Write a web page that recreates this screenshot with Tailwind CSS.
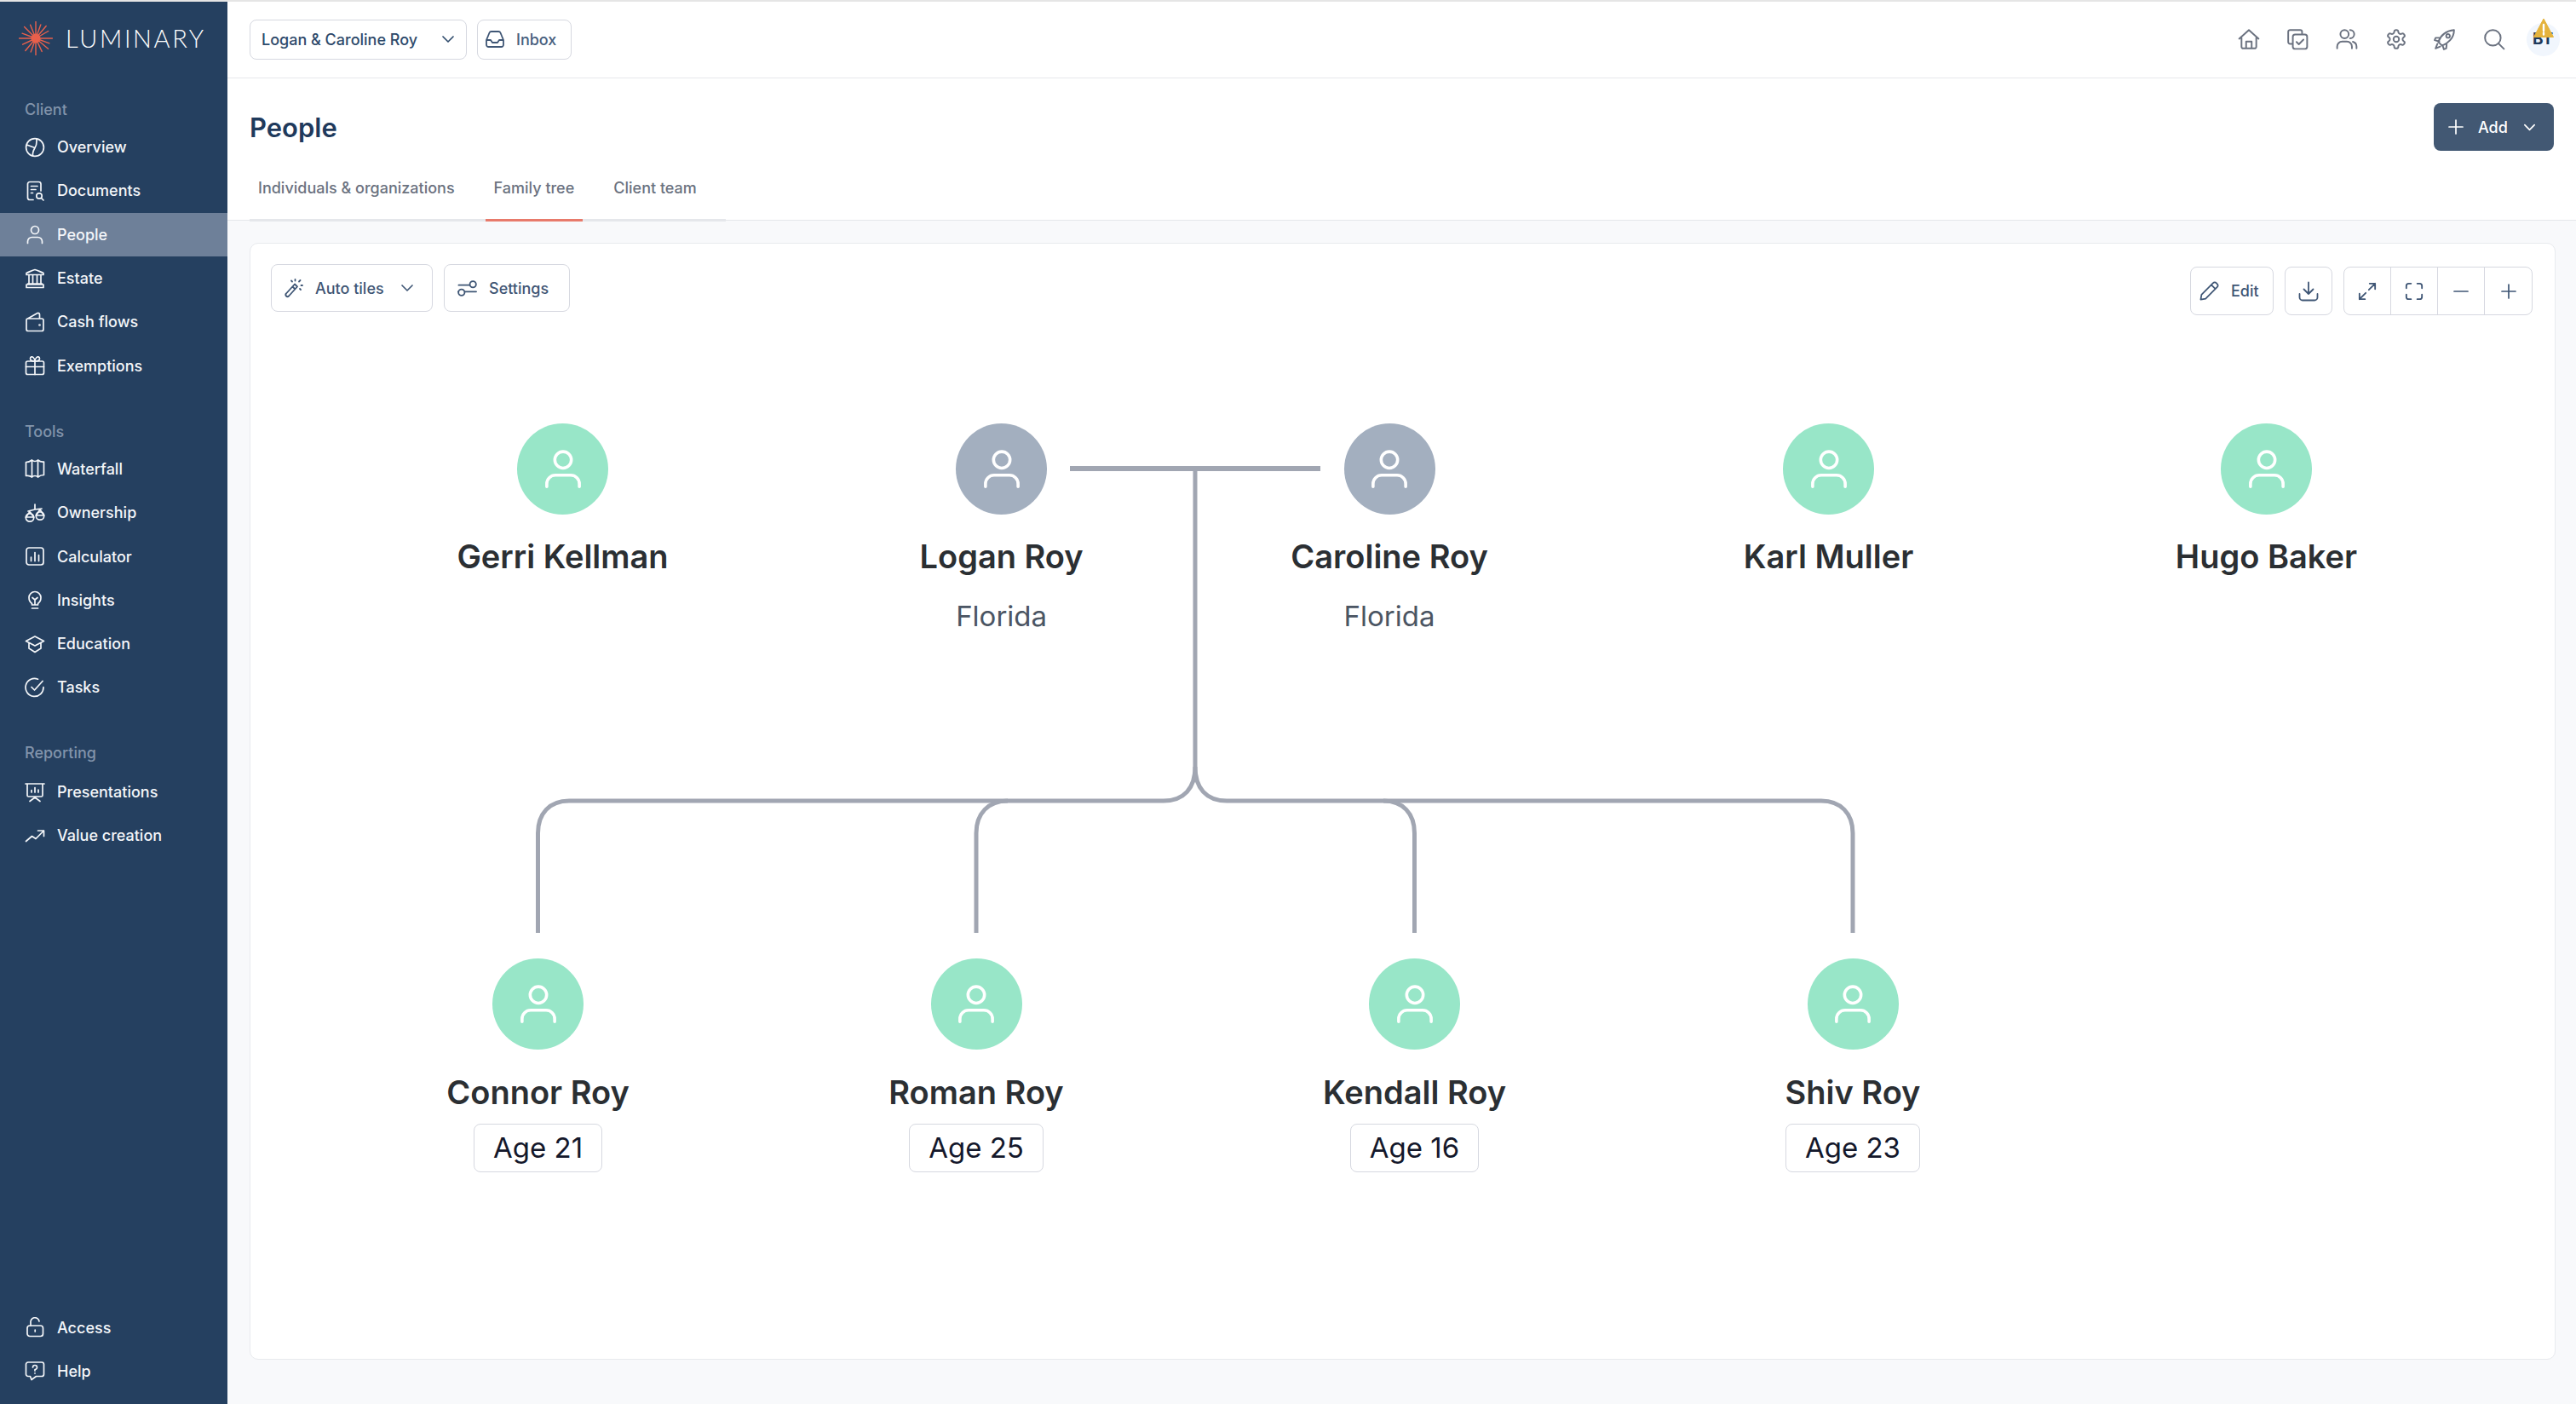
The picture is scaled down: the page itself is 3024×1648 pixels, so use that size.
<!DOCTYPE html>
<html lang="en">
<head>
<meta charset="utf-8">
<title>Luminary - People</title>
<script src="https://cdn.jsdelivr.net/npm/@tailwindcss/browser@4"></script>
</head>
<body class="m-0">
<div class="w-[3024px] h-[1648px] overflow-hidden flex flex-col bg-white font-['Inter',sans-serif]">
  <div class="h-[2px] bg-[#e5e5e5] shrink-0"></div>
  <div class="flex flex-1 min-h-0">
    <!-- Sidebar -->
    <aside class="w-[267px] shrink-0 bg-[#254060] flex flex-col text-[18px] font-medium text-[#f4f6f9] pb-[13px]">
      <div class="h-[87px] shrink-0 flex items-center pl-[22px] gap-[15px] -mt-[1px]">
        <svg width="40" height="40" viewBox="-20 -20 40 40" stroke="#e8604c" stroke-width="1.4" stroke-linecap="round">
          <circle r="5.5" fill="#e8604c" stroke="none"/>
          <g>
            <line y2="-19.5"/><line y2="-17" transform="rotate(20)"/><line y2="-19" transform="rotate(40)"/><line y2="-17" transform="rotate(60)"/><line y2="-19.5" transform="rotate(90)"/><line y2="-17" transform="rotate(110)"/><line y2="-19" transform="rotate(130)"/><line y2="-17" transform="rotate(155)"/><line y2="-19.5" transform="rotate(180)"/><line y2="-17" transform="rotate(200)"/><line y2="-19" transform="rotate(220)"/><line y2="-17" transform="rotate(245)"/><line y2="-19.5" transform="rotate(270)"/><line y2="-17" transform="rotate(290)"/><line y2="-19" transform="rotate(315)"/><line y2="-17" transform="rotate(338)"/>
          </g>
        </svg>
        <span class="font-['Lato',sans-serif] font-light text-[29px] tracking-[2.6px] text-white leading-none">LUMINARY</span>
      </div>
      <div class="h-[37px] mt-[22px] flex items-center pl-[29px] text-[#8294ab]">Client</div>
      <a class="h-[51.3px] flex items-center pl-[29px] gap-[14px]">
        <svg class="size-[24px] shrink-0" viewBox="0 0 24 24" fill="none" stroke="currentColor" stroke-width="1.7" stroke-linecap="round" stroke-linejoin="round"><circle cx="12" cy="12" r="10.4"/><path d="M14 2C14 7 14.500 9 12 12.500C10.500 15 9 18 9.500 22M12 12.500L2.500 9"/></svg>
        Overview</a>
      <a class="h-[51.3px] flex items-center pl-[29px] gap-[14px]">
        <svg class="size-[24px] shrink-0" viewBox="0 0 24 24" fill="none" stroke="currentColor" stroke-width="1.7" stroke-linecap="round" stroke-linejoin="round"><path d="M10 22.500H6A2.500 2.500 0 0 1 3.500 20V4A2.500 2.500 0 0 1 6 1.500H16.500A2.500 2.500 0 0 1 19 4V12M7.500 6.500H15M7.500 10.500H13M7.500 14.500H9.500"/><circle cx="17" cy="18" r="3.200"/><path d="M19.500 20.500L22 23"/></svg>
        Documents</a>
      <a class="h-[51.3px] flex items-center pl-[29px] gap-[14px] bg-[#6e8099]">
        <svg class="size-[24px] shrink-0" viewBox="0 0 24 24" fill="none" stroke="currentColor" stroke-width="1.7" stroke-linecap="round" stroke-linejoin="round"><circle cx="12" cy="7" r="4.500"/><path d="M3.500 22.500V20.500A5 5 0 0 1 8.500 15.500H15.500A5 5 0 0 1 20.500 20.500V22.500"/></svg>
        People</a>
      <a class="h-[51.3px] flex items-center pl-[29px] gap-[14px]">
        <svg class="size-[24px] shrink-0" viewBox="0 0 24 24" fill="none" stroke="currentColor" stroke-width="1.7" stroke-linecap="round" stroke-linejoin="round"><path d="M2 7.500V5.500C6 4 9 2 12 1.500C15 2 18 4 22 5.500V7.500H2ZM5 7.500V18M9.500 7.500V18M14.500 7.500V18M19 7.500V18M3.500 18H20.500V19M2 19H22V22.500H2Z"/></svg>
        Estate</a>
      <a class="h-[51.3px] flex items-center pl-[29px] gap-[14px]">
        <svg class="size-[24px] shrink-0" viewBox="0 0 24 24" fill="none" stroke="currentColor" stroke-width="1.7" stroke-linecap="round" stroke-linejoin="round"><path d="M3.500 8H20A2 2 0 0 1 22 10V20.500A2 2 0 0 1 20 22.500H4A2 2 0 0 1 2 20.500V9.500A1.500 1.500 0 0 1 3.500 8ZM3.500 8L15 1.500C16.500 1 17.500 2 17.500 3.500V8"/><circle cx="17.500" cy="15.500" r="0.500"/></svg>
        Cash flows</a>
      <a class="h-[51.3px] flex items-center pl-[29px] gap-[14px]">
        <svg class="size-[24px] shrink-0" viewBox="0 0 24 24" fill="none" stroke="currentColor" stroke-width="1.7" stroke-linecap="round" stroke-linejoin="round"><rect x="1.500" y="7" width="21" height="15.500" rx="2"/><path d="M1.500 13.500H22.500M12 7V22.500M12 7C9 7 6.500 6.500 6.500 4S9 1.500 10 2.500C11 3.500 12 5 12 7ZM12 7C15 7 17.500 6.500 17.500 4S15 1.500 14 2.500C13 3.500 12 5 12 7Z"/></svg>
        Exemptions</a>

      <div class="h-[37px] mt-[33px] flex items-center pl-[29px] text-[#8294ab]">Tools</div>
      <a class="h-[51.3px] flex items-center pl-[29px] gap-[14px]">
        <svg class="size-[24px] shrink-0" viewBox="0 0 24 24" fill="none" stroke="currentColor" stroke-width="1.7" stroke-linecap="round" stroke-linejoin="round"><path d="M1.500 4.500C4 4.500 6 4 8.500 2C10.500 4 13.500 4 15.500 2C18 4 20 4.500 22.500 4C22.500 10 22.500 15 22.500 19.500C20 19.500 18 20 15.500 22C13.500 20 10.500 20 8.500 22C6 20 4 20 1.500 20.500ZM8.500 2V22M15.500 2V22"/></svg>
        Waterfall</a>
      <a class="h-[51.3px] flex items-center pl-[29px] gap-[14px]">
        <svg class="size-[24px] shrink-0" viewBox="0 0 24 24" fill="none" stroke="currentColor" stroke-width="1.7" stroke-linecap="round" stroke-linejoin="round"><path d="M12 2V8M4 10L12 8L20 7M6 10.500L1.500 17M6 10.500L10.500 17M18 8L13.500 15M18 8L22.500 15"/><circle cx="6" cy="17.500" r="4.700"/><circle cx="18" cy="15.500" r="4.700"/><path d="M1.500 17H10.500M13.500 15H22.500"/></svg>
        Ownership</a>
      <a class="h-[51.3px] flex items-center pl-[29px] gap-[14px]">
        <svg class="size-[24px] shrink-0" viewBox="0 0 24 24" fill="none" stroke="currentColor" stroke-width="1.7" stroke-linecap="round" stroke-linejoin="round"><rect x="2" y="2" width="20" height="20" rx="3"/><path d="M7.500 13V17.500M12 7.500V17.500M16.500 10.500V17.500"/></svg>
        Calculator</a>
      <a class="h-[51.3px] flex items-center pl-[29px] gap-[14px]">
        <svg class="size-[24px] shrink-0" viewBox="0 0 24 24" fill="none" stroke="currentColor" stroke-width="1.7" stroke-linecap="round" stroke-linejoin="round"><path d="M8.500 16.500C6.500 15 5 13 5 9.500A7 7 0 0 1 19 9.500C19 13 17.500 15 15.500 16.500V18H8.500ZM8.500 22H15.500M9 9.500L12 12L15 9.500M12 12V17.500"/></svg>
        Insights</a>
      <a class="h-[51.3px] flex items-center pl-[29px] gap-[14px]">
        <svg class="size-[24px] shrink-0" viewBox="0 0 24 24" fill="none" stroke="currentColor" stroke-width="1.7" stroke-linecap="round" stroke-linejoin="round"><path d="M12 3L1.500 8.500L12 14L22.500 8.500ZM5 10.500V17L12 21.500L19 17V10.500"/></svg>
        Education</a>
      <a class="h-[51.3px] flex items-center pl-[29px] gap-[14px]">
        <svg class="size-[24px] shrink-0" viewBox="0 0 24 24" fill="none" stroke="currentColor" stroke-width="1.7" stroke-linecap="round" stroke-linejoin="round"><path d="M22 11.500A10.500 10.500 0 1 1 15.500 2.200M8 11.500L11.500 15L21 4.500"/></svg>
        Tasks</a>

      <div class="h-[37px] mt-[32px] mb-[2.4px] flex items-center pl-[29px] text-[#8294ab]">Reporting</div>
      <a class="h-[51.3px] flex items-center pl-[29px] gap-[14px]">
        <svg class="size-[24px] shrink-0" viewBox="0 0 24 24" fill="none" stroke="currentColor" stroke-width="1.7" stroke-linecap="round" stroke-linejoin="round"><path d="M1 2H23M3 2V15.500A1.500 1.500 0 0 0 4.500 17H19.500A1.500 1.500 0 0 0 21 15.500V2M12 17V19M12 18L6 22.500M12 18L18 22.500M8 12V9.500M12 12V6.500M16 12V9"/></svg>
        Presentations</a>
      <a class="h-[51.3px] flex items-center pl-[29px] gap-[14px]">
        <svg class="size-[24px] shrink-0" viewBox="0 0 24 24" fill="none" stroke="currentColor" stroke-width="1.7" stroke-linecap="round" stroke-linejoin="round"><path d="M1.500 18.500L8.500 12.500L13 15.500L22.500 6M15.500 6H22.500V12.500"/></svg>
        Value creation</a>

      <a class="h-[51.3px] mt-auto flex items-center pl-[29px] gap-[14px]">
        <svg class="size-[24px] shrink-0" viewBox="0 0 24 24" fill="none" stroke="currentColor" stroke-width="1.7" stroke-linecap="round" stroke-linejoin="round"><rect x="3" y="10" width="18.500" height="12.500" rx="3"/><path d="M7 10V6.500A5 5 0 0 1 17 5M12.200 15V17"/></svg>
        Access</a>
      <a class="h-[51.3px] flex items-center pl-[29px] gap-[14px]">
        <svg class="size-[24px] shrink-0" viewBox="0 0 24 24" fill="none" stroke="currentColor" stroke-width="1.7" stroke-linecap="round" stroke-linejoin="round"><path d="M4 2H20A2.500 2.500 0 0 1 22.500 4.500V16A2.500 2.500 0 0 1 20 18.500H13.500L8 22.500L6.500 18.500H4A2.500 2.500 0 0 1 1.500 16V4.500A2.500 2.500 0 0 1 4 2ZM9.500 8A2.500 2.500 0 1 1 12 10.500V12M12 14.800V15"/></svg>
        Help</a>
    </aside>

    <!-- Main -->
    <div class="flex-1 min-w-0 flex flex-col bg-[#f8f9fb]">
      <header class="h-[90px] shrink-0 bg-white border-b border-[#e7e8eb] flex items-center justify-between pl-[26px] pr-[19.500px] text-[18px] text-[#2e4a6b] font-medium">
        <div class="flex items-center gap-[12px] -mt-[1px]">
          <button class="w-[255px] h-[47px] flex items-center justify-between pl-[13px] pr-[12px] bg-white border border-[#d6d8e0] rounded-[8px]">
            Logan &amp; Caroline Roy
            <svg class="size-[18px]" viewBox="0 0 24 24" fill="none" stroke="currentColor" stroke-width="2.200" stroke-linecap="round" stroke-linejoin="round"><path d="M4 8L12 16L20 8"/></svg>
          </button>
          <button class="w-[111px] h-[47px] flex items-center gap-[13px] pl-[8px] bg-white border border-[#d6d8e0] rounded-[8px] text-[#48607e]">
            <svg class="size-[24px]" viewBox="0 0 24 24" fill="none" stroke="#3f5675" stroke-width="1.800" stroke-linecap="round" stroke-linejoin="round"><path d="M2 13L5.500 4.500A2.500 2.500 0 0 1 7.800 3H16.200A2.500 2.500 0 0 1 18.500 4.500L22 13V18.500A2.500 2.500 0 0 1 19.500 21H4.500A2.500 2.500 0 0 1 2 18.500ZM2 13H7L9 16H15L17 13H22"/></svg>
            Inbox
          </button>
        </div>
        <div class="flex items-center -mt-[1px]">
          <div class="flex items-center gap-[31.700px] text-[#6b7280]">
            <svg class="size-[26px]" viewBox="0 0 24 24" fill="none" stroke="currentColor" stroke-width="1.800" stroke-linecap="round" stroke-linejoin="round"><path d="M1.500 11.500L12 2L22.500 11.500M4 9.500V20A2 2 0 0 0 6 22H18A2 2 0 0 0 20 20V9.500M9 22V14.500H15V22"/></svg>
            <svg class="size-[26px]" viewBox="0 0 24 24" fill="none" stroke="currentColor" stroke-width="1.800" stroke-linecap="round" stroke-linejoin="round"><path d="M6.500 17H4A2 2 0 0 1 2 15V4A2 2 0 0 1 4 2H15A2 2 0 0 1 17 4V6.500"/><rect x="7" y="7" width="15.500" height="15.500" rx="2.500"/><path d="M11 15L13.500 17.500L18.500 12.500"/></svg>
            <svg class="size-[26px]" viewBox="0 0 24 24" fill="none" stroke="currentColor" stroke-width="1.800" stroke-linecap="round" stroke-linejoin="round"><circle cx="9.500" cy="6.500" r="4.500"/><path d="M1.500 22V20A5.500 5.500 0 0 1 7 14.500H12A5.500 5.500 0 0 1 17.500 20V22M15.500 2A4.500 4.500 0 0 1 15.500 11M18.500 14.800A5.500 5.500 0 0 1 22.500 20V22"/></svg>
            <svg class="size-[26px]" viewBox="0 0 24 24" fill="none" stroke="currentColor" stroke-width="1.800" stroke-linecap="round" stroke-linejoin="round"><path d="M12.220 2h-.44a2 2 0 0 0-2 2v.18a2 2 0 0 1-1 1.730l-.43.250a2 2 0 0 1-2 0l-.150-.080a2 2 0 0 0-2.730.730l-.220.380a2 2 0 0 0 .730 2.730l.150.100a2 2 0 0 1 1 1.720v.510a2 2 0 0 1-1 1.740l-.150.090a2 2 0 0 0-.730 2.730l.220.380a2 2 0 0 0 2.730.730l.150-.080a2 2 0 0 1 2 0l.430.250a2 2 0 0 1 1 1.730V20a2 2 0 0 0 2 2h.44a2 2 0 0 0 2-2v-.18a2 2 0 0 1 1-1.730l.430-.250a2 2 0 0 1 2 0l.150.080a2 2 0 0 0 2.730-.730l.220-.390a2 2 0 0 0-.730-2.730l-.150-.080a2 2 0 0 1-1-1.740v-.500a2 2 0 0 1 1-1.740l.150-.090a2 2 0 0 0 .730-2.730l-.220-.380a2 2 0 0 0-2.730-.730l-.150.080a2 2 0 0 1-2 0l-.430-.250a2 2 0 0 1-1-1.730V4a2 2 0 0 0-2-2z"/><circle cx="12" cy="12" r="3"/></svg>
            <svg class="size-[26px]" viewBox="0 0 24 24" fill="none" stroke="currentColor" stroke-width="1.800" stroke-linecap="round" stroke-linejoin="round"><path d="M7 17L5 15C7 9 12 3 22 2C22 11 15 17 9 19ZM6 10.500L2 10.500L1 13L6 14.500M14 18L13.500 22L11 23L9.500 18.500M15.500 6.500A2 2 0 1 0 15.500 10.500A2 2 0 1 0 15.500 6.500M4 17L2 22L7 20"/></svg>
            <svg class="size-[26px]" viewBox="0 0 24 24" fill="none" stroke="currentColor" stroke-width="1.800" stroke-linecap="round" stroke-linejoin="round"><circle cx="10.500" cy="10.500" r="8.500"/><path d="M16.500 16.500L22.500 22.500"/></svg>
          </div>
          <div class="relative ml-[24.500px] size-[39px] rounded-full bg-[#f1f6fd] flex items-center justify-center text-[19px] font-bold text-[#1f3a5c]">
            BT
            <svg class="absolute -top-[6px] left-[8px]" width="24" height="23" viewBox="0 0 24 23"><path d="M12 1L23.500 22.500H0.500Z" fill="#e5b33c" stroke="#e5b33c" stroke-linejoin="round"/><path d="M12 8V15M12 17.500V19.500" stroke="#ffffff" stroke-width="2.400" stroke-linecap="round"/></svg>
          </div>
        </div>
      </header>

      <div class="h-[167px] shrink-0 bg-white border-b border-[#e5e7eb] pl-[26px] pr-[26px]">
        <div class="h-[114px] flex items-center justify-between">
          <h1 class="text-[31px] font-semibold text-[#1f3a5c] leading-none">People</h1>
          <button class="w-[141px] h-[56px] flex items-center bg-[#425873] rounded-[8px] text-white text-[18px] font-medium pl-[17px]">
            <svg class="size-[18px] mr-[17px]" viewBox="0 0 18 18" fill="none" stroke="currentColor" stroke-width="1.700" stroke-linecap="round"><path d="M9 1V17M1 9H17"/></svg>
            Add
            <svg class="size-[17px] ml-[17px]" viewBox="0 0 24 24" fill="none" stroke="currentColor" stroke-width="2.400" stroke-linecap="round" stroke-linejoin="round"><path d="M4 8L12 16L20 8"/></svg>
          </button>
        </div>
        <div class="w-[559px] h-[54px] border-b-[3px] border-[#e5e7eb] flex gap-[26px] text-[18px] font-medium text-[#6b7280]">
          <a class="h-[54px] pt-[3px] px-[10px] leading-[24px]">Individuals &amp; organizations</a>
          <a class="h-[54px] pt-[3px] px-[10px] leading-[24px] border-b-[3px] border-[#e87a6b]">Family tree</a>
          <a class="h-[54px] pt-[3px] px-[10px] leading-[24px]">Client team</a>
        </div>
      </div>

      <!-- Card -->
      <main class="relative flex-1 ml-[26px] mr-[24px] mt-[26px] mb-[52px] bg-white border border-[#e8eaee] rounded-[10px] text-[18px] font-medium text-[#3f5675]">
        <!-- Family tree canvas -->
        <svg class="absolute left-0 top-0" width="2705" height="1309" viewBox="294 286 2705 1309" fill="none" stroke="#a1a6b2" stroke-linecap="butt">
          <path d="M1256 550H1550" stroke-width="6"/>
          <path stroke-width="5" d="M1403 550V900C1403 925 1390 940 1366 940H668C645 940 631.500 955 631.500 978V1095"/>
          <path stroke-width="5" d="M1403 900C1403 925 1416 940 1440 940H2138C2161 940 2175 955 2175 978V1095"/>
          <path stroke-width="5" d="M1183 940C1160 940 1146 955 1146 978V1095"/>
          <path stroke-width="5" d="M1624 940C1647 940 1660.500 955 1660.500 978V1095"/>
        </svg>

        <div class="absolute left-[216.500px] top-[211px] w-[300px] flex flex-col items-center">
          <div class="size-[107px] rounded-full bg-[#98e6c8] flex items-center justify-center"><svg class="size-[54px]" viewBox="0 0 24 24" fill="none" stroke="#ffffff" stroke-width="1.600" stroke-linecap="round"><circle cx="12" cy="7" r="4.300"/><path d="M3.500 21V19.500A4.500 4.500 0 0 1 8 15H16A4.500 4.500 0 0 1 20.500 19.500V21"/></svg></div>
          <div class="mt-[26px] text-[38px] leading-[46px] font-semibold text-[#2b2f33]">Gerri Kellman</div>
        </div>
        <div class="absolute left-[731.600px] top-[211px] w-[300px] flex flex-col items-center">
          <div class="size-[107px] rounded-full bg-[#a3afbf] flex items-center justify-center"><svg class="size-[54px]" viewBox="0 0 24 24" fill="none" stroke="#ffffff" stroke-width="1.600" stroke-linecap="round"><circle cx="12" cy="7" r="4.300"/><path d="M3.500 21V19.500A4.500 4.500 0 0 1 8 15H16A4.500 4.500 0 0 1 20.500 19.500V21"/></svg></div>
          <div class="mt-[26px] text-[38px] leading-[46px] font-semibold text-[#2b2f33]">Logan Roy</div>
          <div class="mt-[27px] text-[33px] leading-[40px] font-normal text-[#4b5563]">Florida</div>
        </div>
        <div class="absolute left-[1187px] top-[211px] w-[300px] flex flex-col items-center">
          <div class="size-[107px] rounded-full bg-[#a3afbf] flex items-center justify-center"><svg class="size-[54px]" viewBox="0 0 24 24" fill="none" stroke="#ffffff" stroke-width="1.600" stroke-linecap="round"><circle cx="12" cy="7" r="4.300"/><path d="M3.500 21V19.500A4.500 4.500 0 0 1 8 15H16A4.500 4.500 0 0 1 20.500 19.500V21"/></svg></div>
          <div class="mt-[26px] text-[38px] leading-[46px] font-semibold text-[#2b2f33]">Caroline Roy</div>
          <div class="mt-[27px] text-[33px] leading-[40px] font-normal text-[#4b5563]">Florida</div>
        </div>
        <div class="absolute left-[1702.500px] top-[211px] w-[300px] flex flex-col items-center">
          <div class="size-[107px] rounded-full bg-[#98e6c8] flex items-center justify-center"><svg class="size-[54px]" viewBox="0 0 24 24" fill="none" stroke="#ffffff" stroke-width="1.600" stroke-linecap="round"><circle cx="12" cy="7" r="4.300"/><path d="M3.500 21V19.500A4.500 4.500 0 0 1 8 15H16A4.500 4.500 0 0 1 20.500 19.500V21"/></svg></div>
          <div class="mt-[26px] text-[38px] leading-[46px] font-semibold text-[#2b2f33]">Karl Muller</div>
        </div>
        <div class="absolute left-[2216.500px] top-[211px] w-[300px] flex flex-col items-center">
          <div class="size-[107px] rounded-full bg-[#98e6c8] flex items-center justify-center"><svg class="size-[54px]" viewBox="0 0 24 24" fill="none" stroke="#ffffff" stroke-width="1.600" stroke-linecap="round"><circle cx="12" cy="7" r="4.300"/><path d="M3.500 21V19.500A4.500 4.500 0 0 1 8 15H16A4.500 4.500 0 0 1 20.500 19.500V21"/></svg></div>
          <div class="mt-[26px] text-[38px] leading-[46px] font-semibold text-[#2b2f33]">Hugo Baker</div>
        </div>

        <div class="absolute left-[187.600px] top-[839px] w-[300px] flex flex-col items-center">
          <div class="size-[107px] rounded-full bg-[#98e6c8] flex items-center justify-center"><svg class="size-[54px]" viewBox="0 0 24 24" fill="none" stroke="#ffffff" stroke-width="1.600" stroke-linecap="round"><circle cx="12" cy="7" r="4.300"/><path d="M3.500 21V19.500A4.500 4.500 0 0 1 8 15H16A4.500 4.500 0 0 1 20.500 19.500V21"/></svg></div>
          <div class="mt-[27px] text-[38px] leading-[46px] font-semibold text-[#2b2f33]">Connor Roy</div>
          <div class="mt-[14px] h-[57px] px-[22px] flex items-center border-[1.500px] border-[#d6d8e0] rounded-[8px] bg-white text-[33px] font-normal text-[#14182b]">Age 21</div>
        </div>
        <div class="absolute left-[702px] top-[839px] w-[300px] flex flex-col items-center">
          <div class="size-[107px] rounded-full bg-[#98e6c8] flex items-center justify-center"><svg class="size-[54px]" viewBox="0 0 24 24" fill="none" stroke="#ffffff" stroke-width="1.600" stroke-linecap="round"><circle cx="12" cy="7" r="4.300"/><path d="M3.500 21V19.500A4.500 4.500 0 0 1 8 15H16A4.500 4.500 0 0 1 20.500 19.500V21"/></svg></div>
          <div class="mt-[27px] text-[38px] leading-[46px] font-semibold text-[#2b2f33]">Roman Roy</div>
          <div class="mt-[14px] h-[57px] px-[22px] flex items-center border-[1.500px] border-[#d6d8e0] rounded-[8px] bg-white text-[33px] font-normal text-[#14182b]">Age 25</div>
        </div>
        <div class="absolute left-[1216.500px] top-[839px] w-[300px] flex flex-col items-center">
          <div class="size-[107px] rounded-full bg-[#98e6c8] flex items-center justify-center"><svg class="size-[54px]" viewBox="0 0 24 24" fill="none" stroke="#ffffff" stroke-width="1.600" stroke-linecap="round"><circle cx="12" cy="7" r="4.300"/><path d="M3.500 21V19.500A4.500 4.500 0 0 1 8 15H16A4.500 4.500 0 0 1 20.500 19.500V21"/></svg></div>
          <div class="mt-[27px] text-[38px] leading-[46px] font-semibold text-[#2b2f33]">Kendall Roy</div>
          <div class="mt-[14px] h-[57px] px-[22px] flex items-center border-[1.500px] border-[#d6d8e0] rounded-[8px] bg-white text-[33px] font-normal text-[#14182b]">Age 16</div>
        </div>
        <div class="absolute left-[1731px] top-[839px] w-[300px] flex flex-col items-center">
          <div class="size-[107px] rounded-full bg-[#98e6c8] flex items-center justify-center"><svg class="size-[54px]" viewBox="0 0 24 24" fill="none" stroke="#ffffff" stroke-width="1.600" stroke-linecap="round"><circle cx="12" cy="7" r="4.300"/><path d="M3.500 21V19.500A4.500 4.500 0 0 1 8 15H16A4.500 4.500 0 0 1 20.500 19.500V21"/></svg></div>
          <div class="mt-[27px] text-[38px] leading-[46px] font-semibold text-[#2b2f33]">Shiv Roy</div>
          <div class="mt-[14px] h-[57px] px-[22px] flex items-center border-[1.500px] border-[#d6d8e0] rounded-[8px] bg-white text-[33px] font-normal text-[#14182b]">Age 23</div>
        </div>

        <!-- Toolbar -->
        <div class="relative flex items-start justify-between pl-[24px] pr-[26px] pt-[24px]">
          <div class="flex gap-[13px]">
            <button class="w-[190px] h-[56px] flex items-center pl-[14px] bg-white border border-[#d6d8e0] rounded-[8px]">
              <svg class="size-[24px] mr-[13px]" viewBox="0 0 24 24" fill="none" stroke="currentColor" stroke-width="1.800" stroke-linecap="round" stroke-linejoin="round"><path d="M13 7.500L16 10.500L6 21.500C5 22.500 4 22.500 3 21.500C2 20.500 2 19.500 3 18.500ZM10.500 10.500L13 13M13.500 2V3.500M19.500 3L18 4.500M22 9H20.500M20 14L19 13M9 3.500L10 4.500"/></svg>
              Auto tiles
              <svg class="size-[18px] ml-[18px]" viewBox="0 0 24 24" fill="none" stroke="currentColor" stroke-width="2.200" stroke-linecap="round" stroke-linejoin="round"><path d="M4 8L12 16L20 8"/></svg>
            </button>
            <button class="w-[148px] h-[56px] flex items-center pl-[15px] bg-white border border-[#d6d8e0] rounded-[8px]">
              <svg class="size-[23px] mr-[14px]" viewBox="0 0 24 24" fill="none" stroke="currentColor" stroke-width="1.900" stroke-linecap="round"><path d="M1.500 8H14M1 16H23M9 16H22"/><circle cx="19" cy="7" r="3.800"/><circle cx="5" cy="17" r="3.800" fill="#ffffff"/></svg>
              Settings
            </button>
          </div>
          <div class="flex gap-[13px] mt-[3px]">
            <button class="w-[98px] h-[57px] flex items-center pl-[10px] bg-white border border-[#d6d8e0] rounded-[8px]">
              <svg class="size-[23px] mr-[14px]" viewBox="0 0 24 24" fill="none" stroke="currentColor" stroke-width="1.800" stroke-linecap="round" stroke-linejoin="round"><path d="M1.500 22.500L2.500 16.500L16.500 2.500C17.800 1.200 19.500 1.200 20.800 2.500L21.500 3.200C22.800 4.500 22.800 6.200 21.500 7.500L7.500 21.500ZM14.500 4.500L19.500 9.500"/></svg>
              Edit
            </button>
            <button class="w-[56px] h-[57px] flex items-center justify-center bg-white border border-[#d6d8e0] rounded-[8px]">
              <svg class="size-[24px]" viewBox="0 0 24 24" fill="none" stroke="currentColor" stroke-width="1.800" stroke-linecap="round" stroke-linejoin="round"><path d="M12 1.500V15M6.500 9.500L12 15L17.500 9.500M1.500 15V19A3.500 3.500 0 0 0 5 22.500H19A3.500 3.500 0 0 0 22.500 19V15"/></svg>
            </button>
            <div class="w-[222px] h-[57px] grid grid-cols-4 divide-x divide-[#d6d8e0] bg-white border border-[#d6d8e0] rounded-[8px]">
              <button class="flex items-center justify-center"><svg class="size-[22px]" viewBox="0 0 24 24" fill="none" stroke="currentColor" stroke-width="2" stroke-linecap="round" stroke-linejoin="round"><path d="M15 2H22V9M22 2L14 10M2 15V22H9M2 22L10 14"/></svg></button>
              <button class="flex items-center justify-center"><svg class="size-[22px]" viewBox="0 0 24 24" fill="none" stroke="currentColor" stroke-width="2" stroke-linecap="round" stroke-linejoin="round"><path d="M2 8V5A3 3 0 0 1 5 2H8M16 2H19A3 3 0 0 1 22 5V8M22 16V19A3 3 0 0 1 19 22H16M8 22H5A3 3 0 0 1 2 19V16"/></svg></button>
              <button class="flex items-center justify-center"><svg class="size-[18px]" viewBox="0 0 18 18" fill="none" stroke="currentColor" stroke-width="1.700" stroke-linecap="round"><path d="M1 9H17"/></svg></button>
              <button class="flex items-center justify-center"><svg class="size-[18px]" viewBox="0 0 18 18" fill="none" stroke="currentColor" stroke-width="1.700" stroke-linecap="round"><path d="M9 1V17M1 9H17"/></svg></button>
            </div>
          </div>
        </div>
      </main>
    </div>
  </div>
</div>
</body>
</html>
